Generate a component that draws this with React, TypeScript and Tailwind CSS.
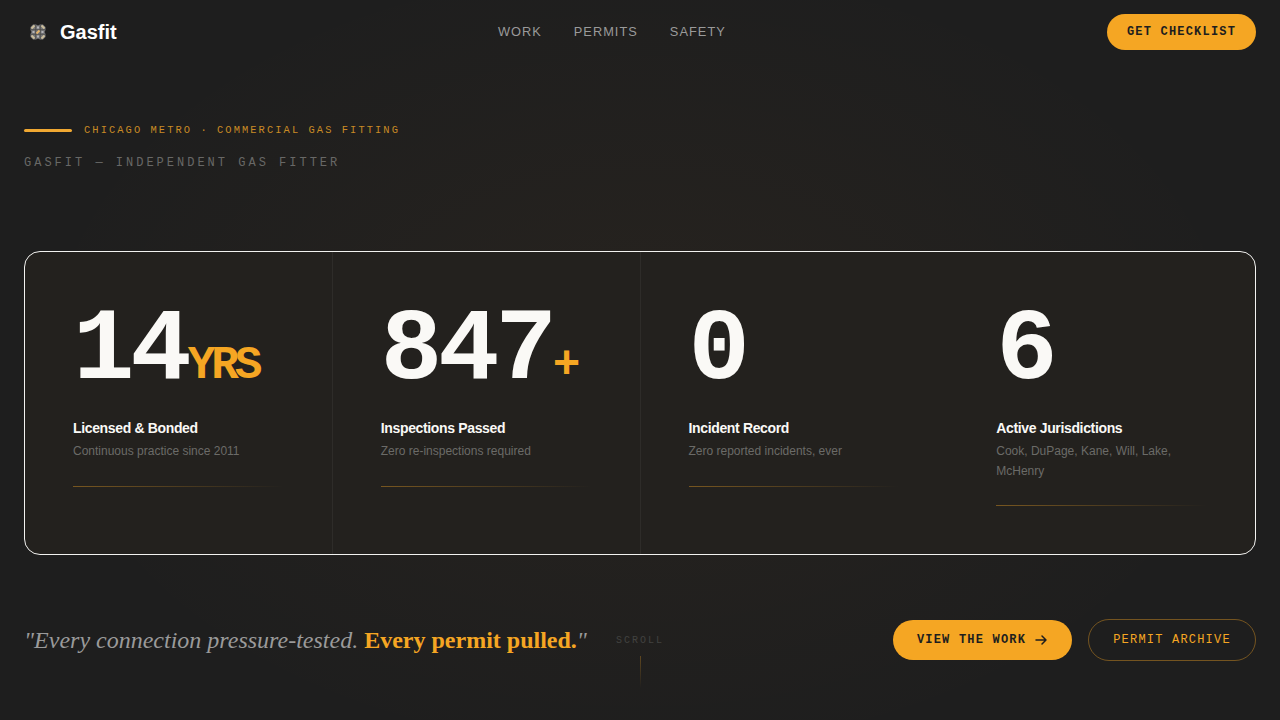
type Stat = {
  value: string;
  suffix?: string;
  label: string;
  detail: string;
  divider?: boolean;
};

const stats: Stat[] = [
  {
    value: "14",
    suffix: "YRS",
    label: "Licensed & Bonded",
    detail: "Continuous practice since 2011",
    divider: true,
  },
  {
    value: "847",
    suffix: "+",
    label: "Inspections Passed",
    detail: "Zero re-inspections required",
    divider: true,
  },
  {
    value: "0",
    label: "Incident Record",
    detail: "Zero reported incidents, ever",
  },
  {
    value: "6",
    label: "Active Jurisdictions",
    detail: "Cook, DuPage, Kane, Will, Lake, McHenry",
  },
];

const LogoMark = () => {
  return (
    <svg width="28" height="28" viewBox="0 0 28 28" fill="none">
      <path
        d="M9 6.5h3l2 1 2-1h3l2.5 2.5v3l-1 2 1 2v3L19 21.5h-3l-2-1-2 1H9L6.500 19v-3l1-2-1-2V9z"
        fill="#77777a"
      />
      <path
        d="M7.500 10.500l3-3M17.500 7.500l3 3M7.500 17.500l3 3M17.500 20.500l3-3"
        stroke="#cdbf9c"
        strokeWidth="1.8"
      />
      <path
        d="M14 8.500v2M14 17.500v2M8.500 14h2M17.500 14h2"
        stroke="#b4b4b6"
        strokeWidth="2"
      />
      <path
        d="M11.700 7v14M16.300 7v14M7 11.700h14M7 16.300h14"
        stroke="#4a4a48"
        strokeWidth="0.8"
      />
      <path d="M12.500 15.500l3-3" stroke="#e5b56c" strokeWidth="1.8" />
    </svg>
  );
};

const Navbar = () => {
  return (
    <header className="flex h-16 items-center justify-between px-6">
      <a className="flex items-center gap-2">
        <LogoMark />
        <span className="text-xl font-bold text-white">Gasfit</span>
      </a>
      <nav className="flex gap-8 text-[12.8px] tracking-[1.024px] text-[#9a9a9a]">
        <a>WORK</a>
        <a>PERMITS</a>
        <a>SAFETY</a>
      </nav>
      <a className="flex h-9 w-[149px] items-center justify-center rounded-full bg-[#f5a623] font-['Liberation_Mono',monospace] text-xs font-bold tracking-[1.2px] text-[#1e1e1e]">
        GET CHECKLIST
      </a>
    </header>
  );
};

const StatCell = ({ stat }: { stat: Stat }) => {
  return (
    <div
      className={`px-12 pt-12 ${stat.divider ? "shadow-[1px_0_0_rgba(255,255,255,0.05)]" : ""}`}
    >
      <p className="h-[102px] font-['Liberation_Mono',monospace] text-[102.4px] leading-none font-bold tracking-[-4.096px] whitespace-nowrap text-[#faf9f6]">
        {stat.value}
        {stat.suffix && (
          <span className="text-[46.08px] leading-none text-[#f5a623]">
            {stat.suffix}
          </span>
        )}
      </p>
      <h3 className="mt-[15px] text-sm leading-[22px] font-bold tracking-tight text-[#faf9f6]">
        {stat.label}
      </h3>
      <p className="mt-[3px] text-xs leading-[19.5px] text-[#6b6b68]">
        {stat.detail}
      </p>
      <div className="mt-6 h-px bg-[linear-gradient(to_right,rgba(245,166,35,0.4),transparent)]" />
    </div>
  );
};

const App = () => {
  return (
    <div className="h-[720px] w-full overflow-hidden bg-[#1e1e1e] bg-[radial-gradient(ellipse_620px_410px_at_50%_50%,rgba(245,150,50,0.045),transparent)] font-['Liberation_Sans',sans-serif]">
      <Navbar />
      <main className="px-6">
        <div className="flex items-center gap-3 pt-[58px]">
          <span className="h-[3px] w-12 rounded-sm bg-[#f0a832]" />
          <span className="font-['Liberation_Mono',monospace] text-[10.4px] leading-4 tracking-[2.08px] text-[#c98b25]">
            CHICAGO METRO · COMMERCIAL GAS FITTING
          </span>
        </div>
        <p className="mt-[15px] font-['Liberation_Mono',monospace] text-xs leading-5 tracking-[3px] text-[#686866]">
          GASFIT — INDEPENDENT GAS FITTER
        </p>

        <section className="mt-[78px] grid h-[304px] grid-cols-4 gap-px overflow-hidden rounded-2xl border border-[#f2f2f0] bg-[#23211e]">
          {stats.map((stat) => (
            <StatCell key={stat.label} stat={stat} />
          ))}
        </section>

        <div className="mt-16 flex h-[42px] items-center">
          <p className="w-[592px] font-['Liberation_Serif',serif] text-2xl whitespace-nowrap text-[#9a9a9a] italic">
            "Every connection pressure-tested.{" "}
            <strong className="text-[#f5a623] not-italic">
              Every permit pulled.
            </strong>
            "
          </p>
          <div className="flex flex-col items-center gap-2 self-start pt-3.5">
            <span className="font-['Liberation_Mono',monospace] text-[10px] leading-[15px] tracking-[2px] text-[#424240]">
              SCROLL
            </span>
            <span className="h-8 w-px bg-linear-to-b from-[#f5a623]/30 to-transparent" />
          </div>
          <div className="ml-auto flex items-center gap-4 font-['Liberation_Mono',monospace] text-xs tracking-[1.2px]">
            <a className="flex h-10 w-[179px] items-center justify-center gap-2 rounded-full bg-[#f5a623] font-bold text-[#1e1e1e]">
              <span>VIEW THE WORK</span>
              <svg
                width="14"
                height="14"
                viewBox="0 0 14 14"
                fill="none"
                stroke="currentColor"
                strokeWidth="1.5"
                strokeLinecap="round"
                strokeLinejoin="round"
              >
                <path d="M2 7h10M8 3l4 4-4 4" />
              </svg>
            </a>
            <a className="flex h-[42px] w-[168px] items-center justify-center rounded-full border border-[#f5a623]/40 text-[#f5a623]">
              PERMIT ARCHIVE
            </a>
          </div>
        </div>
      </main>
    </div>
  );
};

export default App;
